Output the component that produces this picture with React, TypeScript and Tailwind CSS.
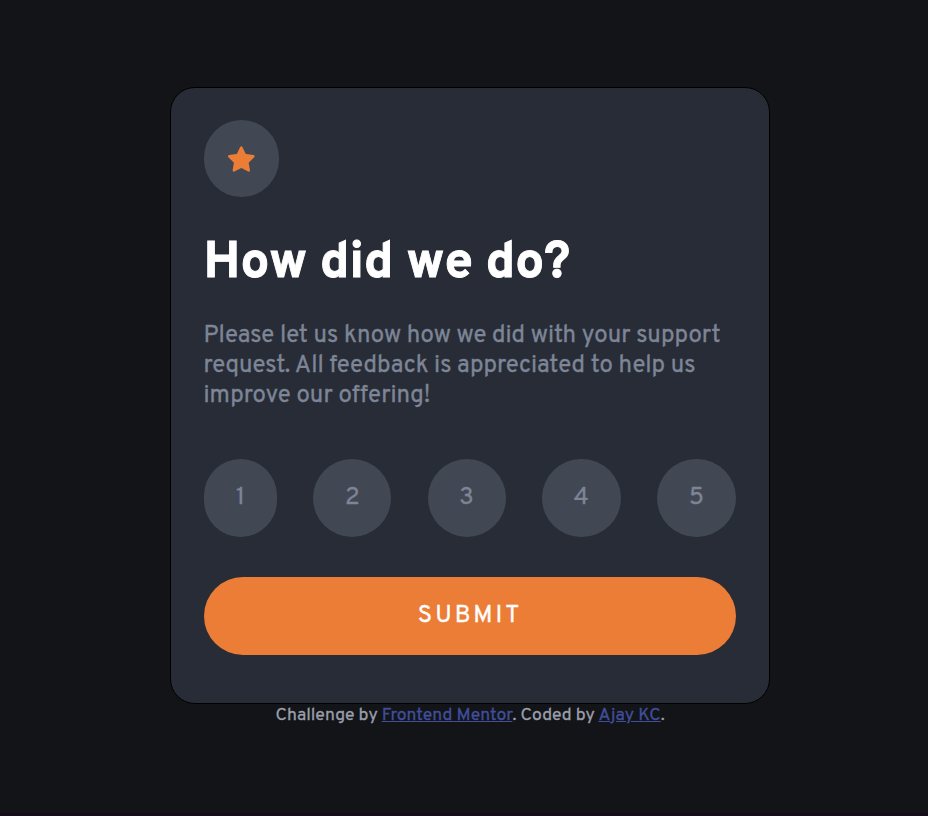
import React from "react";

const ratings = [
  { n: "1", w: "w-[73px]" },
  { n: "2", w: "w-[78px]" },
  { n: "3", w: "w-[78px]" },
  { n: "4", w: "w-[79px]" },
  { n: "5", w: "w-[79px]" },
];

export default function App() {
  return (
    <div className="flex h-[816px] w-[928px] flex-col border-b-3 border-[#160c19] bg-[#121417] font-['Overpass','Open_Sans',sans-serif]">
      <main className="mt-[87px] ml-[170px] h-[617px] w-[600px] rounded-[25px] border border-black bg-[#272c36] px-[33px] pt-8">
        <div className="flex h-[77px] w-[75px] items-center justify-center rounded-full bg-[#424853]">
          <svg width="27" height="26" viewBox="0 0 17 16" className="text-[#eb7d36]">
            <path d="m9.067.43 1.99 4.031c.112.228.33.386.58.422l4.45.647a.772.772 0 0 1 .427 1.316l-3.22 3.138a.773.773 0 0 0-.222.683l.76 4.431a.772.772 0 0 1-1.12.813l-3.98-2.092a.773.773 0 0 0-.718 0l-3.98 2.092a.772.772 0 0 1-1.119-.813l.76-4.431a.77.77 0 0 0-.222-.683L.233 6.846A.772.772 0 0 1 .661 5.53l4.449-.647a.772.772 0 0 0 .58-.422L7.68.43a.774.774 0 0 1 1.387 0Z" fill="currentColor" />
          </svg>
        </div>
        <h1 className="mt-[38px] -ml-[0.5px] text-[51.2px] leading-[60px] font-bold whitespace-nowrap text-white [-webkit-text-stroke:0.9px_#fff]">How did we do?</h1>
        <p className="mt-[26px] -ml-[0.5px] text-[24px] leading-[30px] whitespace-nowrap text-[#7d8596] [-webkit-text-stroke:0.35px_#7d8596]">
          Please let us know how we did with your support<br />
          request. All feedback is appreciated to help us<br />
          improve our offering!
        </p>
        <div className="mt-[48px] flex w-[532px] justify-between">
          {ratings.map((r) => (
            <button key={r.n} className={`${r.w} h-[78px] rounded-full bg-[#424853] text-2xl text-[#7d8596] [-webkit-text-stroke:0.35px_#7d8596]`}>{r.n}</button>
          ))}
        </div>
        <button className="mt-10 h-[78px] w-[532px] rounded-full bg-[#eb7d36] text-2xl tracking-[3px] text-white [-webkit-text-stroke:0.4px_#fff]">SUBMIT</button>
      </main>
      <footer className="ml-[275.5px] pt-px text-[17.6px] leading-[22px] whitespace-nowrap text-[#9a9fac] [-webkit-text-stroke:0.3px]">
        Challenge by <a className="text-[#414e9c] underline">Frontend Mentor</a>. Coded by <a className="text-[#414e9c] underline">Ajay KC</a>.
      </footer>
    </div>
  );
}
